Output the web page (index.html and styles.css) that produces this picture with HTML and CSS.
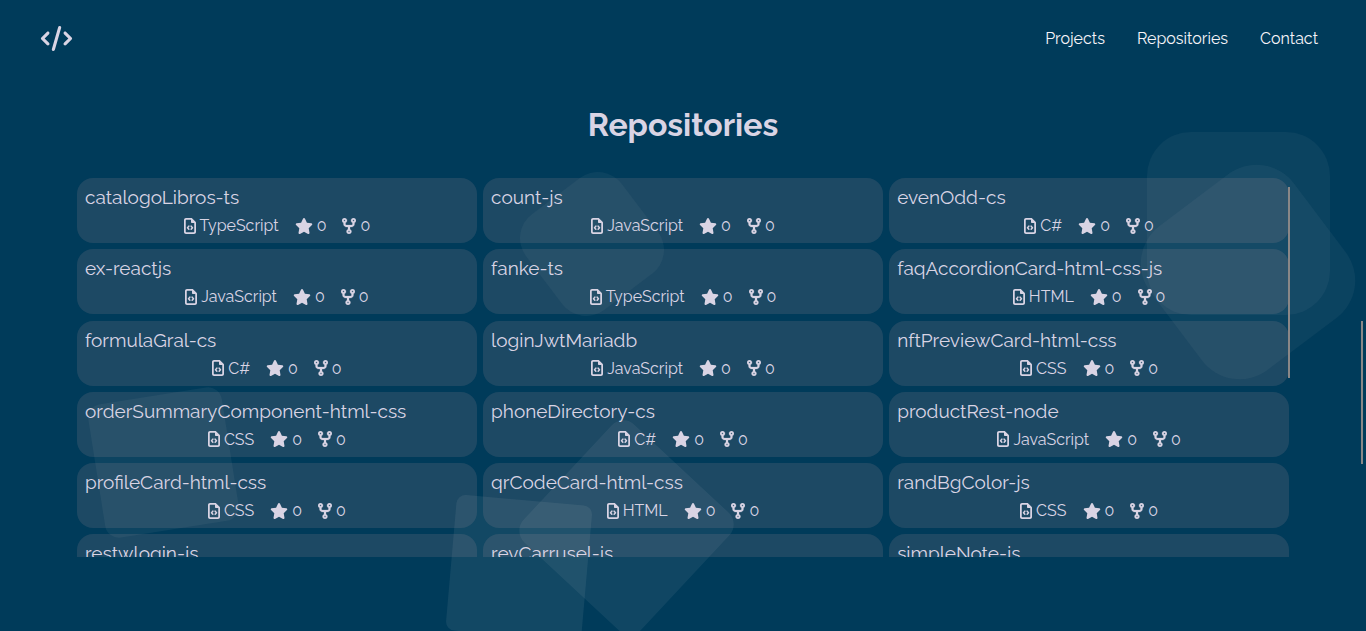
FILE: index.html
```
<!DOCTYPE html>
<html lang="en">
<head>
<meta charset="utf-8">
<title>Repositories</title>
<link rel="stylesheet" href="styles.css">
</head>
<body>
<svg class="sprite" aria-hidden="true">
  <symbol id="file" viewBox="0 0 384 512"><path fill-rule="evenodd" d="M64 0C28.700 0 0 28.700 0 64v384c0 35.300 28.700 64 64 64h256c35.300 0 64-28.700 64-64V154c0-13-5-25-14-34L264 14C255 5 243 0 230 0H64zm0 56h160v72c0 18 14 32 32 32h72v280c0 9-7 16-16 16H72c-9 0-16-7-16-16V72c0-9 7-16 16-16z"/><path fill="none" stroke="currentColor" stroke-width="50" stroke-linecap="round" stroke-linejoin="round" d="M155 262l-42 48 42 48M229 262l42 48-42 48"/></symbol>
  <symbol id="star" viewBox="0 0 576 512"><path d="M316.900 18C311.600 7 300.400 0 288.100 0s-23.400 7-28.800 18L195 150.300 51.400 171.500c-12 1.800-22 10.200-25.700 21.700s-.7 24.200 7.900 32.700L137.800 329 113.200 474.700c-2 12 3 24.200 12.900 31.300s23 8 33.800 2.300l128.300-68.500 128.300 68.500c10.800 5.700 23.900 4.900 33.800-2.300s14.900-19.300 12.900-31.300L438.500 329 542.700 225.900c8.600-8.500 11.700-21.200 7.900-32.700s-13.700-19.900-25.700-21.700L381.200 150.300 316.900 18z"/></symbol>
  <symbol id="fork" viewBox="0 0 448 512"><path fill-rule="evenodd" stroke="currentColor" stroke-width="8" d="M80 104c13.300 0 24-10.700 24-24s-10.700-24-24-24S56 66.700 56 80s10.700 24 24 24zm80-24c0 32.800-19.700 61-48 73.300V192c0 17.700 14.300 32 32 32H304c17.700 0 32-14.300 32-32V153.300C307.700 141 288 112.800 288 80c0-44.200 35.800-80 80-80s80 35.800 80 80c0 32.800-19.700 61-48 73.300V192c0 53-43 96-96 96H256v70.700c28.300 12.300 48 40.500 48 73.300c0 44.200-35.800 80-80 80s-80-35.800-80-80c0-32.800 19.700-61 48-73.300V288H144c-53 0-96-43-96-96V153.300C19.700 141 0 112.800 0 80C0 35.800 35.800 0 80 0s80 35.800 80 80zm208 24c13.300 0 24-10.700 24-24s-10.700-24-24-24s-24 10.700-24 24s10.700 24 24 24zM248 432c0-13.300-10.700-24-24-24s-24 10.700-24 24s10.700 24 24 24s24-10.700 24-24z"/></symbol>
</svg>

<div class="shapes" aria-hidden="true">
  <span class="shape shape-a"></span>
  <span class="shape shape-b"></span>
  <span class="shape shape-c"></span>
  <span class="shape shape-d"></span>
  <span class="shape shape-e"></span>
  <span class="shape shape-f"></span>
</div>

<header class="header">
  <a class="logo" href="#" aria-label="Home">
    <svg viewBox="0 0 640 512"><path d="M392.800 1.200c-17-4.900-34.700 5-39.600 22l-128 448c-4.900 17 5 34.700 22 39.600s34.700-5 39.600-22l128-448c4.900-17-5-34.700-22-39.600zm80.600 120.100c-12.500 12.500-12.500 32.800 0 45.300L562.700 256l-89.400 89.400c-12.500 12.500-12.500 32.800 0 45.300s32.800 12.500 45.300 0l112-112c12.500-12.500 12.500-32.800 0-45.300l-112-112c-12.500-12.500-32.800-12.500-45.300 0zm-306.700 0c-12.500-12.500-32.800-12.500-45.300 0l-112 112c-12.500 12.500-12.500 32.800 0 45.300l112 112c12.500 12.500 32.800 12.500 45.300 0s12.500-32.800 0-45.300L77.300 256l89.400-89.400c12.500-12.500 12.500-32.800 0-45.300z"/></svg>
  </a>
  <nav class="nav">
    <a href="#projects">Projects</a>
    <a href="#repositories">Repositories</a>
    <a href="#contact">Contact</a>
  </nav>
</header>

<main class="main" id="repositories">
  <h1 class="title">Repositories</h1>
  <div class="panel">
    <div class="list" id="list"></div>
    <span class="list-thumb"></span>
  </div>
</main>
<span class="page-thumb"></span>
<script src="script.js"></script>
</body>
</html>
```
FILE: styles.css
```
* { box-sizing: border-box; }
body {
  margin: 0;
  height: 100vh;
  overflow: hidden;
  position: relative;
  background: #003b5a;
  color: #d9d4e4;
  font-family: Raleway, Lato, "Open Sans", sans-serif;
  font-size: 16px;
  font-variant-numeric: oldstyle-nums;
}
svg { display: block; fill: currentColor; }
.sprite { position: absolute; width: 0; height: 0; }

.shapes { position: absolute; inset: 0; overflow: hidden; }
.shape { position: absolute; background: rgba(225, 225, 225, 0.05); }
.shape-a { left: 1147px; top: 132px; width: 183px; height: 183px; border-radius: 44px; }
.shape-b { left: 1158px; top: 182px; width: 180px; height: 180px; border-radius: 47px; transform: rotate(-37deg); }
.shape-c { left: 532px; top: 184px; width: 120px; height: 120px; border-radius: 30px; transform: rotate(-37deg); }
.shape-d { left: 96px; top: 395px; width: 135px; height: 135px; border-radius: 14px; transform: rotate(-9deg); background: rgba(225, 225, 225, 0.06); }
.shape-e { left: 451px; top: 500px; width: 136px; height: 136px; border-radius: 9px; transform: rotate(5deg); background: rgba(225, 225, 225, 0.08); }
.shape-f { left: 546px; top: 447px; width: 161px; height: 161px; border-radius: 16px; transform: rotate(43deg); background: rgba(225, 225, 225, 0.07); }

.header {
  position: relative;
  display: flex;
  align-items: center;
  justify-content: space-between;
  height: 76px;
  padding: 0 48px 0 40px;
}
.logo { color: inherit; }
.logo svg { width: 33px; height: 25px; }
.nav { display: flex; gap: 32px; }
.nav a { color: #f6f4f8; text-decoration: none; }

.main { position: relative; padding: 30px 77px 0; }
.title {
  margin: 0 0 34px;
  font-size: 32px;
  line-height: 38px;
  font-weight: 700;
  text-align: center;
}
.panel { position: relative; }
.list {
  display: grid;
  grid-template-columns: repeat(3, 1fr);
  gap: 1vh;
  height: 60vh;
  overflow-y: auto;
  align-content: start;
  scrollbar-width: none;
}
.card {
  display: grid;
  gap: 8px;
  padding: 8px;
  border-radius: 16px;
  background: rgba(225, 172, 168, 0.13);
}
.name { margin: 0; font-size: 19px; line-height: 22px; font-weight: 400; }
.meta { display: flex; justify-content: center; gap: 16px; line-height: 19px; }
.stat { display: flex; align-items: center; gap: 4px; }
.icon { height: 16px; }
.icon-file { width: 12px; }
.icon-star { width: 18px; }
.icon-fork { width: 14px; }

.list-thumb, .page-thumb { position: absolute; width: 2px; background: #8a8787; }
.list-thumb { right: -1px; top: 9px; height: 191px; }
.page-thumb { right: 3px; top: 321px; height: 143px; }
```
FILE: script.js
```
const repos = [
  ["catalogoLibros-ts", "TypeScript"],
  ["count-js", "JavaScript"],
  ["evenOdd-cs", "C#"],
  ["ex-reactjs", "JavaScript"],
  ["fanke-ts", "TypeScript"],
  ["faqAccordionCard-html-css-js", "HTML"],
  ["formulaGral-cs", "C#"],
  ["loginJwtMariadb", "JavaScript"],
  ["nftPreviewCard-html-css", "CSS"],
  ["orderSummaryComponent-html-css", "CSS"],
  ["phoneDirectory-cs", "C#"],
  ["productRest-node", "JavaScript"],
  ["profileCard-html-css", "CSS"],
  ["qrCodeCard-html-css", "HTML"],
  ["randBgColor-js", "CSS"],
  ["restwlogin-js", "JavaScript"],
  ["revCarrusel-js", "JavaScript"],
  ["simpleNote-js", "JavaScript"]
];

const stat = (icon, text) =>
  `<span class="stat"><svg class="icon icon-${icon}"><use href="#${icon}"/></svg><span>${text}</span></span>`;

document.getElementById("list").innerHTML = repos.map(([name, lang]) => `
  <article class="card">
    <h2 class="name">${name}</h2>
    <div class="meta">${stat("file", lang)}${stat("star", 0)}${stat("fork", 0)}</div>
  </article>`).join("");
```
